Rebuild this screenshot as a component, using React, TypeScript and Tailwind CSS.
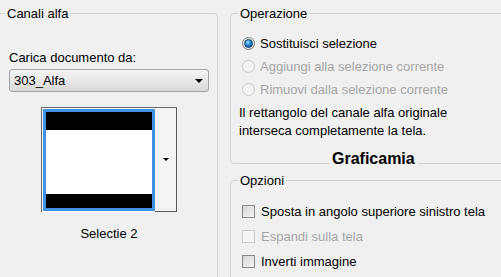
import React from "react";

function Radio({ checked, disabled }: { checked?: boolean; disabled?: boolean }) {
  return (
    <svg width="13" height="13" viewBox="0 0 13 13" className="shrink-0">
      <defs>
        <radialGradient id="rbg" cx="0.35" cy="0.3" r="0.8">
          <stop offset="0" stopColor="#ffffff" />
          <stop offset="1" stopColor="#dcdcdc" />
        </radialGradient>
        <radialGradient id="rdot" cx="0.4" cy="0.35" r="0.7">
          <stop offset="0" stopColor="#9fdcff" />
          <stop offset="0.5" stopColor="#2a8ad4" />
          <stop offset="1" stopColor="#0a3f78" />
        </radialGradient>
      </defs>
      {disabled ? (
        <circle cx="6.5" cy="6.5" r="6" fill="#f4f4f4" stroke="#cacaca" strokeWidth="1" />
      ) : (
        <circle cx="6.5" cy="6.5" r="6" fill="url(#rbg)" stroke="#7b7b7b" strokeWidth="1" />
      )}
      {checked && <circle cx="6.5" cy="6.5" r="4" fill="url(#rdot)" stroke="#0c3c6c" strokeWidth="0.8" />}
    </svg>
  );
}

function Check({ disabled }: { disabled?: boolean }) {
  return (
    <svg width="13" height="13" viewBox="0 0 13 13" className="shrink-0">
      <defs>
        <linearGradient id="cbg" x1="0" y1="0" x2="1" y2="1">
          <stop offset="0" stopColor="#d4d4d4" />
          <stop offset="1" stopColor="#f7f7f7" />
        </linearGradient>
      </defs>
      {disabled ? (
        <rect x="0.5" y="0.5" width="12" height="12" fill="#f5f5f5" stroke="#cccccc" />
      ) : (
        <rect x="0.5" y="0.5" width="12" height="12" fill="url(#cbg)" stroke="#8a8a8a" />
      )}
    </svg>
  );
}

function Arrow({ w = 8, h = 4 }: { w?: number; h?: number }) {
  return (
    <svg width={w} height={h} viewBox={`0 0 ${w} ${h}`}>
      <polygon points={`0,0 ${w},0 ${w / 2},${h}`} fill="#000" />
    </svg>
  );
}

export default function App() {
  return (
    <div className="w-[501px] h-[277px] overflow-hidden bg-[#f0f0f0] flex items-start font-['Liberation_Sans','Arial',sans-serif] text-[13px] leading-[15px] text-black">
      {/* Left group */}
      <fieldset className="ml-[-3px] mt-[6px] w-[221px] h-[300px] shrink-0 min-w-0 border border-[#d3d3d3] rounded-[4px] pl-[7px] pr-0">
        <legend className="px-[2px]">Canali alfa</legend>
        <div className="flex flex-col">
          <p className="mt-[29px] ml-[4px]">Carica documento da:</p>
          <div className="mt-[4px] ml-[4px] w-[200px] h-[23px] rounded-[3px] border border-[#a3a3a3] bg-gradient-to-b from-[#f4f4f4] to-[#dadada] flex items-center justify-between pl-[4px] pr-[5px]">
            <span>303_Alfa</span>
            <Arrow w={8} h={4} />
          </div>
          <div className="mt-[15px] ml-[36px] w-[136px] h-[105px] flex border-l border-t border-[#6a6a6a] bg-[#fbfbfb]">
            <div className="pl-[1px] pt-[1px]">
              <div className="w-[112px] h-[102px] border-[3px] border-[#3f92e8] flex flex-col">
                <div className="h-[18px] bg-black" />
                <div className="flex-1 bg-white" />
                <div className="h-[14px] bg-black" />
              </div>
            </div>
            <div className="flex-1 h-[104px] border-r border-b border-[#5a5a5a] bg-[#f4f4f4] flex items-center justify-center">
              <Arrow w={6} h={3} />
            </div>
          </div>
          <p className="mt-[14px] ml-[36px] w-[136px] text-center">Selectie 2</p>
        </div>
      </fieldset>

      {/* Right column */}
      <div className="ml-[12px] w-[290px] shrink-0 flex flex-col relative">
        <fieldset className="mt-[6px] h-[158px] shrink-0 min-w-0 border border-[#d3d3d3] rounded-[4px] pl-[7px] pr-0">
          <legend className="px-[2px]">Operazione</legend>
          <div className="flex flex-col">
            <div className="mt-[11px] h-[23px] flex items-center gap-[5px] ml-[4px]">
              <Radio checked />
              <span>Sostituisci selezione</span>
            </div>
            <div className="h-[23px] flex items-center gap-[5px] ml-[4px] text-[#a6a6a6]">
              <Radio disabled />
              <span>Aggiungi alla selezione corrente</span>
            </div>
            <div className="h-[23px] flex items-center gap-[5px] ml-[4px] text-[#a6a6a6]">
              <Radio disabled />
              <span>Rimuovi dalla selezione corrente</span>
            </div>
            <p className="mt-[3px] ml-[1px] leading-[18px]">
              Il rettangolo del canale alfa originale
              <br />
              interseca completamente la tela.
            </p>
          </div>
        </fieldset>

        <span className="absolute left-[99px] top-[151px] px-[3px] bg-[#f0f0f0] text-[16px] leading-[16px] font-bold">
          Graficamia
        </span>

        <fieldset className="mt-[9px] h-[140px] shrink-0 min-w-0 border border-[#d3d3d3] rounded-[4px] pl-[7px] pr-0">
          <legend className="px-[2px]">Opzioni</legend>
          <div className="flex flex-col">
            <div className="mt-[11px] h-[25px] flex items-center gap-[6px] ml-[4px]">
              <Check />
              <span>Sposta in angolo superiore sinistro tela</span>
            </div>
            <div className="h-[25px] flex items-center gap-[6px] ml-[4px] text-[#a6a6a6]">
              <Check disabled />
              <span>Espandi sulla tela</span>
            </div>
            <div className="h-[25px] flex items-center gap-[6px] ml-[4px]">
              <Check />
              <span>Inverti immagine</span>
            </div>
          </div>
        </fieldset>
      </div>
    </div>
  );
}
